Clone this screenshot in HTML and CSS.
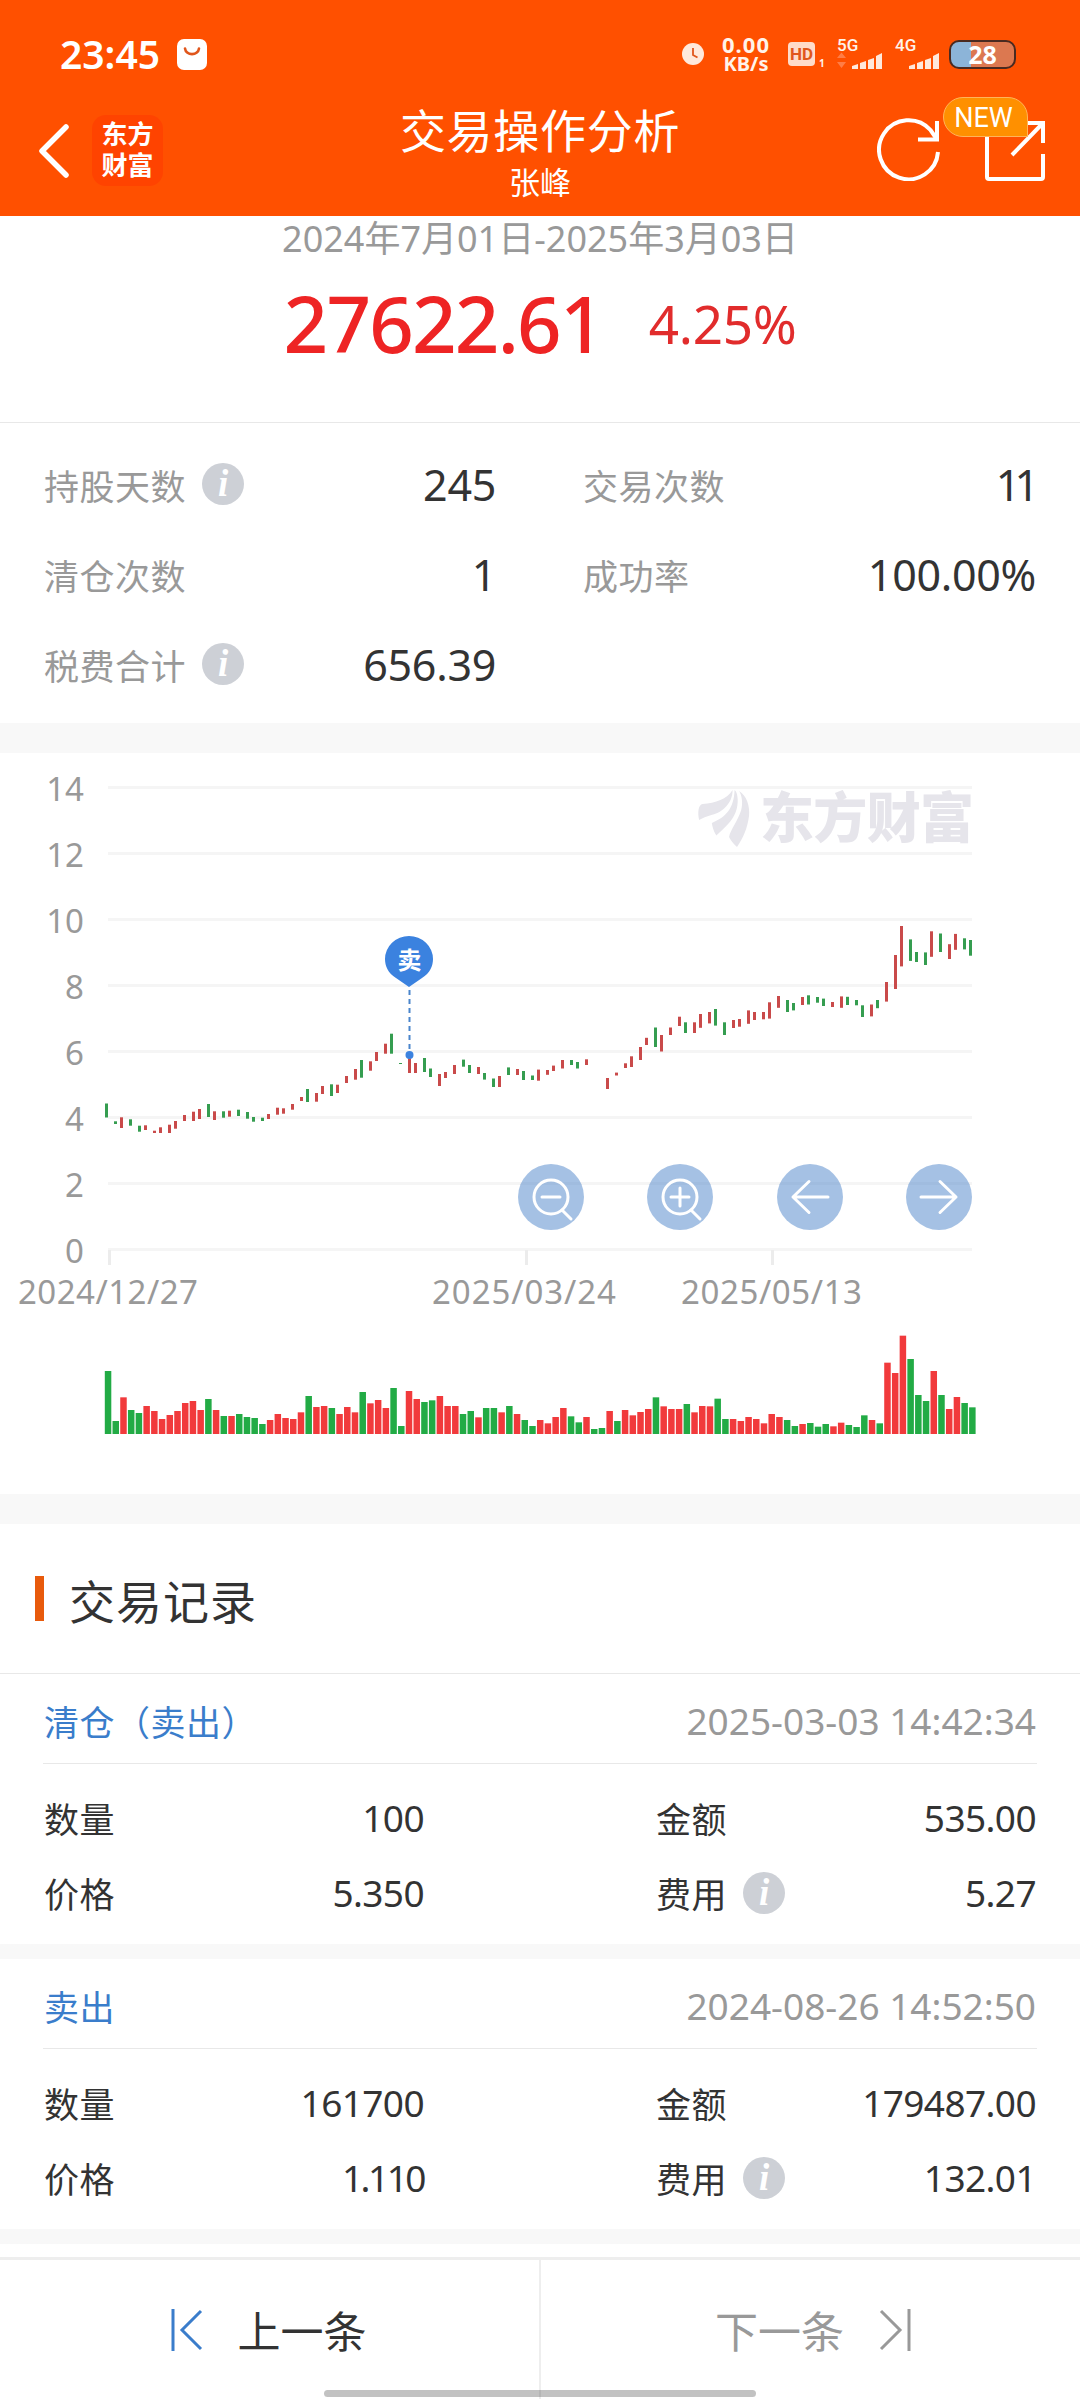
FILE: index.html
```html
<!DOCTYPE html>
<html lang="zh-CN">
<head>
<meta charset="UTF-8">
<meta name="viewport" content="width=device-width, initial-scale=1.0">
<title>交易操作分析</title>
<link rel="stylesheet" href="styles.css">
</head>
<body>

<header class="header">
    <div class="status-bar">
        <span class="clock">23:45</span>
        <svg class="icon-bag" width="30" height="31" viewBox="0 0 30 31">
            <rect width="30" height="31" rx="7" fill="#fff"/>
            <path d="M8 9.500c1 7.500 13 7.500 14 0" fill="none" stroke="#e0561c" stroke-width="2.600" stroke-linecap="round"/>
        </svg>
        <div class="status-right">
            <svg class="icon-alarm" width="22" height="22" viewBox="0 0 22 22">
                <circle cx="11" cy="11" r="11" fill="#ffe9dc"/>
                <path d="M11 5v7l4.500 2.500" fill="none" stroke="#e0561c" stroke-width="1.800"/>
            </svg>
            <div class="net-speed"><span>0.00</span><span>KB/s</span></div>
            <span class="hd">HD</span>
            <span class="sim-no">1</span>
            <div class="signal signal-5g">
                <span>5G</span>
                <svg width="46" height="18" viewBox="0 0 46 18">
                    <path d="M0 6l4.500-5.500L9 6zM0 10h9l-4.500 6z" fill="#ff7d46"/>
                    <path d="M15 17v-3l6-2v5zM23 17v-6l6-2v8zM31 17V8l6-2v11zM39 17V4l6-3v16z" fill="#ffe9dc"/>
                </svg>
            </div>
            <div class="signal signal-4g">
                <span>4G</span>
                <svg width="46" height="18" viewBox="0 0 46 18">
                    <path d="M14 17v-3l6-2v5zM22 17v-6l6-2v8zM30 17V8l6-2v11zM38 17V4l6-3v16z" fill="#ffe9dc"/>
                </svg>
            </div>
            <span class="battery">28</span>
        </div>
    </div>

    <nav class="nav-bar">
        <svg class="icon-back" width="32" height="56" viewBox="0 0 32 56">
            <path d="M28 4L4 28l24 24" fill="none" stroke="#fff" stroke-width="5.500" stroke-linecap="round" stroke-linejoin="round"/>
        </svg>
        <div class="app-logo">东方<br>财富</div>
        <div class="nav-title">
            <h1>交易操作分析</h1>
            <p>张峰</p>
        </div>
        <div class="nav-actions">
            <svg width="64" height="64" viewBox="0 0 64 64">
                <path d="M61 35A29.500 29.500 0 1 1 53.500 13L59 21" fill="none" stroke="#fff" stroke-width="4"/>
                <path d="M60 4v18.500H41" fill="none" stroke="#fff" stroke-width="4"/>
            </svg>
            <div class="share">
                <svg width="64" height="64" viewBox="0 0 64 64">
                    <path d="M25 6H5q-1 0-1 1v53q0 2 2 2h52q2 0 2-2V37M36 6h24v20M60 6L29 38" fill="none" stroke="#fff" stroke-width="4"/>
                </svg>
                <span class="badge">NEW</span>
            </div>
        </div>
    </nav>
</header>

<section class="summary">
    <p class="period">2024年7月01日-2025年3月03日</p>
    <div class="profit">
        <span class="profit-amount">27622.61</span>
        <span class="profit-rate">4.25%</span>
    </div>
</section>

<section class="stats">
    <div class="stat"><span>持股天数</span><i class="info">i</i><b>245</b></div>
    <div class="stat"><span>交易次数</span><b class="narrow">11</b></div>
    <div class="stat"><span>清仓次数</span><b>1</b></div>
    <div class="stat"><span>成功率</span><b>100.00%</b></div>
    <div class="stat"><span>税费合计</span><i class="info">i</i><b>656.39</b></div>
</section>

<section class="chart">
    <svg id="kline" width="1080" height="741" viewBox="0 753 1080 741">
        <g id="grid"></g>
        <g class="watermark">
            <g transform="translate(540 740) scale(.3444 .37)">
                <path d="M462 216C457 195 460 175 472 173C510 170 543 160 559 135C560 170 530 195 500 202C485 206 470 212 462 216Z"/>
                <path d="M512 258C503 245 500 232 499 224C540 208 563 185 565 135C575 142 578 172 568 195C558 220 535 238 512 258Z"/>
                <path d="M572 289C560 280 552 268 549 262C552 245 575 217 584 190C590 170 586 150 578 138C600 150 610 180 607 205C602 240 590 265 572 289Z"/>
            </g>
            <text x="760" y="838" textLength="214">东方财富</text>
        </g>
        <g id="candles"></g>
        <g id="volumes"></g>
        <g class="marker">
            <path d="M409.500 990v62" stroke-dasharray="5 4"/>
            <circle cx="409.500" cy="1055" r="4"/>
            <path d="M409 987l-13-9c-8-5-11-12-11-19a24 23 0 0 1 48 0c0 7-3 14-11 19z"/>
            <text x="409.500" y="969">卖</text>
        </g>
    </svg>
    <div class="chart-tools">
        <button class="tool"><svg viewBox="0 0 66 66"><circle cx="33" cy="33" r="17"/><path d="M24 33h18M44 46l9 9"/></svg></button>
        <button class="tool"><svg viewBox="0 0 66 66"><circle cx="33" cy="33" r="17"/><path d="M24 33h18M33 24v18M44 46l9 9"/></svg></button>
        <button class="tool"><svg viewBox="0 0 66 66"><path d="M51 33H16M32 17.500L16 33l16 15.500"/></svg></button>
        <button class="tool"><svg viewBox="0 0 66 66"><path d="M15 33h35M34 17.500L50 33 34 48.500"/></svg></button>
    </div>
</section>

<section class="records">
    <h2>交易记录</h2>

    <article class="record">
        <div class="record-head"><span>清仓（卖出）</span><time>2025-03-03 14:42:34</time></div>
        <dl class="record-body">
            <div><dt>数量</dt><dd>100</dd></div>
            <div><dt>金额</dt><dd>535.00</dd></div>
            <div><dt>价格</dt><dd>5.350</dd></div>
            <div><dt>费用</dt><i class="info">i</i><dd>5.27</dd></div>
        </dl>
    </article>

    <article class="record">
        <div class="record-head"><span>卖出</span><time>2024-08-26 14:52:50</time></div>
        <dl class="record-body">
            <div><dt>数量</dt><dd>161700</dd></div>
            <div><dt>金额</dt><dd>179487.00</dd></div>
            <div><dt>价格</dt><dd class="narrow">1.110</dd></div>
            <div><dt>费用</dt><i class="info">i</i><dd>132.01</dd></div>
        </dl>
    </article>
</section>

<footer class="pager">
    <a class="pager-prev">
        <svg width="32" height="44" viewBox="0 0 32 44"><path d="M2 1v42M30 3L11 22l19 19"/></svg>
        <span>上一条</span>
    </a>
    <a class="pager-next">
        <span>下一条</span>
        <svg width="32" height="44" viewBox="0 0 32 44"><path d="M30 1v42M2 3l19 19L2 41"/></svg>
    </a>
    <div class="home-indicator"></div>
</footer>

<script src="chart.js"></script>
</body>
</html>
```
FILE: chart.js
```js
// K线: 颜色 x 上沿 下沿
const candles = `
g 106.5 1103.5 1117.5|g 115.5 1121.3 1124|r 121.5 1117.3 1128|g 130.5 1119.3 1125.7|g 139.5 1125.7 1131.7|r 145.5 1125.3 1130
r 154.5 1130.7 1133|r 160.5 1127.3 1133|r 169.5 1124.7 1133|r 175.5 1121 1128.7|r 184.5 1115 1121|r 193.5 1111.7 1121
r 199.5 1109 1119|g 208.5 1104 1117|r 214.5 1111.3 1120|g 223.5 1111.3 1117.7|r 229.5 1110.7 1116.7|g 238.5 1109.7 1116
g 247.5 1112 1118.7|g 253.5 1117 1121.7|g 262.5 1117.7 1121|r 268.5 1114 1119|r 277.5 1107.7 1114.7|r 283.5 1108.3 1113.7
r 292.5 1104 1109.7|r 301.5 1097 1101|g 307.5 1089 1102|r 316.5 1093 1101.7|r 322.5 1086 1094|g 331.5 1084.3 1096
r 337.5 1084.7 1093|r 346.5 1076 1083|r 355.5 1069 1079.7|g 361.5 1060 1077.7|r 370.5 1061.3 1070.7|r 376.5 1052 1061
r 385.5 1043.7 1053.7|g 391.5 1033.7 1053.7|g 400.5 1063 1064|r 409.5 1058.3 1073|r 415.5 1063 1073|g 424.5 1058 1072
g 430.5 1068.5 1077|r 439.5 1074 1086|r 445.5 1072 1078|r 454.5 1065 1074|g 463.5 1059.6 1066.7|g 469.5 1065 1073
r 478.5 1067 1074|g 484.5 1073 1079.6|g 493.5 1078.5 1087|r 499.5 1076 1087|g 508.5 1067.4 1075|r 517.5 1069 1075
g 523.5 1071 1080|g 532.5 1075.5 1080|r 538.5 1069.6 1080.7|r 547.5 1070 1074.8|r 553.5 1065.6 1071|r 562.5 1060 1068.5
g 571.5 1060 1065|g 577.5 1062 1068.5|r 586.5 1059.3 1065|r 607.5 1078 1089|r 616.5 1072.6 1075.5|r 625.5 1063.3 1068
r 631.5 1056.3 1067|r 640.5 1047 1060|r 646.5 1037.8 1045|g 655.5 1027.5 1047|r 661.5 1035 1051.5|r 670.5 1027.5 1035
r 679.5 1016.7 1026|g 685.5 1022.3 1033|r 694.5 1022.3 1033|r 700.5 1014 1027.8|r 709.5 1012 1023.4|g 715.5 1009 1025.6
g 724.5 1022.3 1035|r 733.5 1020 1028|r 739.5 1019 1026.7|r 748.5 1010.4 1023.8|r 754.5 1012 1020|r 763.5 1012 1019.3
r 769.5 1002.3 1018.6|r 778.5 996 1007.8|g 787.5 1000 1012|g 793.5 1003 1010.4|r 802.5 997 1005|g 808.5 995.3 1004.5
g 817.5 997 1002.7|g 823.5 998.6 1006|r 832.5 1002 1007|r 841.5 996.4 1007.8|g 847.5 996.8 1005|g 856.5 1000 1005.3
g 862.5 1005.3 1017|r 871.5 1004.5 1016.4|g 877.5 1000 1008.2|r 886.5 982 1001.6|r 895.5 955 989|r 901.5 926 966.4
g 910.5 939.4 960.9|g 916.5 952 962|g 925.5 952.4 965|r 931.5 931.3 956.8|g 940.5 933.5 952|r 949.5 944.2 959
r 955.5 933.9 949.8|g 964.5 938.3 949.4|g 970.5 940 955.7`;

// 成交量: 颜色+柱高(1/3像素)
const volumes = `g189 g39 r110 g72 g63 r84 r69 r45 r57 r69 r93 r99 r72 g105 r72 g54 r54 g60 g51 g48 g30 r42 r60 r48 r45 r65
g114 r81 r84 g78 r60 r81 r65 g126 r92 r102 r78 g138 g24 r129 r105 g96 g101 r114 r84 r84 g60 g69 r50 g78 g78 r65 g84 r60
g42 g24 r42 r32 r51 r78 g53 g35 r51 g15 g18 r69 g39 r72 r56 r66 r75 g110 r83 r75 r75 g90 r65 r84 r83 g106 g45 r45 r39 r51
r45 r32 r60 r51 g42 g24 r30 g33 g22 g30 r23 r34 g27 g21 g56 r42 g32 r214 r183 r295 g225 g117 g99 r189 g117 r75 r111 g93 g80`;

const BASE_Y = 1434;

function svg(parent, tag, attrs, text) {
    const el = document.createElementNS('http://www.w3.org/2000/svg', tag);
    for (const key in attrs) el.setAttribute(key, attrs[key]);
    if (text) el.textContent = text;
    document.getElementById(parent).appendChild(el);
}

// 网格和Y轴
for (let i = 0; i <= 7; i++) {
    const y = Math.round(786 + i * 66);
    svg('grid', 'rect', { class: 'grid-line', x: 108, y: y, width: 864, height: 3 });
    svg('grid', 'text', { class: 'axis', x: 84, y: y + 14.5, 'text-anchor': 'end' }, String(14 - i * 2));
}

// X轴
[['2024/12/27', 109.5, 18, 180], ['2025/03/24', 526.5, 432, 184], ['2025/05/13', 772.5, 681, 181]].forEach(([date, tick, x, w]) => {
    svg('grid', 'rect', { class: 'tick', x: tick - 1.5, y: 1250, width: 3, height: 15 });
    svg('grid', 'text', { class: 'axis', x: x, y: 1304, textLength: w }, date);
});

candles.trim().split(/[|\n]/).forEach(item => {
    const [color, x, top, bottom] = item.split(' ');
    svg('candles', 'rect', { class: 'candle-' + color, x: x - 1.5, y: top, width: 3, height: bottom - top });
});

volumes.split(/\s+/).forEach((item, i) => {
    const h = parseInt(item.slice(1), 10) / 3;
    svg('volumes', 'rect', { class: 'volume-' + item[0], x: 104.8 + i * 7.717, y: BASE_Y - h, width: 6.5, height: h });
});
```
FILE: styles.css
```css
* {
    box-sizing: border-box;
}

body {
    margin: 0;
    width: 1080px;
    height: 2400px;
    overflow: hidden;
    background-color: #fff;
    color: #333;
    font-family: "Noto Sans", "Noto Sans CJK SC", sans-serif;
    font-size: 35px;
}

h1, h2, p, dl, dd {
    margin: 0;
    font-weight: normal;
}

svg {
    display: block;
    flex: none;
}

/* 顶部 */
.header {
    height: 216px;
    background-color: #ff5000;
    color: #fff;
}

/* 状态栏 */
.status-bar {
    display: flex;
    align-items: center;
    height: 108px;
    padding: 0 64px 0 60px;
}
.clock {
    width: 117px;
    font-size: 39px;
    font-weight: 600;
    line-height: 54px;
}
.status-right {
    display: flex;
    align-items: center;
    margin-left: auto;
    color: #fff3ea;
}
.net-speed {
    display: flex;
    flex-direction: column;
    align-items: center;
    width: 52px;
    margin: 0 16px 0 16px;
    font-size: 20px;
    font-weight: 700;
    line-height: 19px;
}
.net-speed span:first-child {
    font-size: 22px;
    letter-spacing: 1px;
}
.hd {
    width: 27px;
    height: 24px;
    border-radius: 4px;
    background-color: #ffdcca;
    color: #e0561c;
    font: 700 17px/24px "Roboto", sans-serif;
    text-align: center;
}
.sim-no {
    width: 22px;
    padding: 17px 0 0 4px;
    font-size: 10px;
    font-weight: 700;
    line-height: 14px;
}
.signal {
    width: 46px;
    height: 32px;
    font: 500 17px/14px "Roboto", sans-serif;
}
.signal span {
    display: block;
}
.signal-4g {
    margin: 0 8px 0 12px;
}
.battery {
    width: 67px;
    height: 29px;
    border: 2px solid #4a2a20;
    border-radius: 10px;
    background: linear-gradient(to right, #8cb4d8 20px, #dc7850 20px);
    color: #fff;
    font-size: 25px;
    font-weight: 700;
    line-height: 25px;
    text-align: center;
}

/* 导航栏 */
.nav-bar {
    display: flex;
    height: 108px;
    padding: 0 33px 0 38px;
}
.icon-back {
    margin-top: 15px;
}
.app-logo {
    width: 71px;
    height: 71px;
    margin: 7px 0 0 22px;
    padding-top: 4px;
    border-radius: 14px;
    background-color: #ff4300;
    font-size: 26px;
    font-weight: 700;
    line-height: 31px;
    text-align: center;
}
.nav-title {
    flex: 1;
    padding-left: 40px;
    text-align: center;
}
.nav-title h1 {
    font-size: 46px;
    line-height: 44px;
    letter-spacing: 0.7px;
}
.nav-title p {
    padding-top: 8px;
    font-size: 31px;
    line-height: 44px;
}
.nav-actions {
    display: flex;
    gap: 42px;
    padding-top: 9px;
}
.share {
    position: relative;
}
.badge {
    position: absolute;
    left: -40px;
    top: -20px;
    width: 85px;
    height: 40px;
    border: 1px solid #ffb45a;
    border-radius: 20px 20px 0 20px;
    background-color: #ff9000;
    font: 27px/40px "Roboto", sans-serif;
    text-align: center;
    padding-right: 4px;
}

/* 收益 */
.summary {
    height: 207px;
    border-bottom: 1px solid #e8e8e8;
    text-align: center;
}
.period {
    padding-top: 1px;
    color: #999;
    font-size: 36px;
    line-height: 44px;
}
.profit {
    display: flex;
    align-items: center;
    justify-content: center;
    gap: 46px;
    height: 124px;
    color: #ee2424;
}
.profit-amount {
    font-size: 78px;
    font-weight: 500;
    letter-spacing: -1.8px;
}
.profit-rate {
    color: #e12c2c;
    font-size: 53px;
    letter-spacing: -0.3px;
}

/* 统计 */
.stats {
    display: grid;
    grid-template-columns: 452px 453px;
    column-gap: 87px;
    grid-auto-rows: 90px;
    height: 300px;
    padding: 16px 44px 0;
    color: #999;
}
.stat {
    display: flex;
    align-items: center;
}
.stat span,
.record-head span,
.record-body dt {
    letter-spacing: 0.5px;
}
.stat b {
    margin-left: auto;
    color: #333;
    font-size: 43px;
    font-weight: normal;
    letter-spacing: -0.3px;
}
.stat .narrow {
    margin-right: 3px;
    letter-spacing: -6px;
}
.info {
    width: 42px;
    height: 42px;
    margin-left: 16px;
    border-radius: 50%;
    background-color: #cdd0d6;
    color: #fff;
    font: italic 700 37px/41px "Liberation Serif", serif;
    text-align: center;
}

/* 图表 */
.chart {
    position: relative;
    height: 801px;
    border-top: 30px solid #f8f8f8;
    border-bottom: 30px solid #f8f8f8;
}
.grid-line {
    fill: #f5f5f5;
}
.tick {
    fill: #ececec;
}
.axis {
    fill: #999;
    font-size: 33px;
}
.candle-r {
    fill: #c94a4a;
}
.candle-g {
    fill: #359d50;
}
.volume-r {
    fill: #f13a3c;
}
.volume-g {
    fill: #22ab45;
}
.watermark {
    fill: #e6e5eb;
    font-family: "Noto Sans CJK SC", sans-serif;
    font-size: 54px;
    font-weight: 900;
}
.marker {
    fill: #3b82df;
}
.marker path:first-child {
    stroke: #4a85cc;
    stroke-width: 2;
}
.marker text {
    fill: #fff;
    font-size: 24px;
    font-weight: 700;
    text-anchor: middle;
}
.chart-tools {
    position: absolute;
    left: 518px;
    top: 411px;
    display: flex;
    justify-content: space-between;
    width: 454px;
}
.tool {
    width: 66px;
    height: 66px;
    padding: 0;
    border: none;
    border-radius: 50%;
    background-color: rgba(75, 132, 201, 0.5);
}
.tool svg {
    fill: none;
    stroke: #fff;
    stroke-width: 3;
    stroke-linecap: round;
    stroke-linejoin: round;
}

/* 交易记录 */
.records h2 {
    display: flex;
    align-items: center;
    height: 150px;
    padding: 0 0 0 35px;
    border-bottom: 1px solid #e8e8e8;
    font-size: 46px;
    letter-spacing: 1px;
}
.records h2::before {
    content: "";
    width: 9px;
    height: 45px;
    margin-right: 25px;
    background-color: #e85a0c;
}
.record {
    height: 285px;
    padding: 0 43px;
    border-bottom: 15px solid #f8f8f8;
}
.record-head {
    display: flex;
    align-items: center;
    justify-content: space-between;
    height: 90px;
    padding: 3px 1px 0;
    border-bottom: 1px solid #e8e8e8;
    color: #3a7dcb;
}
.record-head time {
    color: #999;
    font-size: 37px;
}
.record-body {
    display: grid;
    grid-template-columns: 380px 380px;
    justify-content: space-between;
    grid-auto-rows: 75px;
    padding: 16px 1px 0;
}
.record-body div {
    display: flex;
    align-items: center;
}
.record-body dd {
    margin-left: auto;
    font-size: 37px;
    letter-spacing: -0.6px;
}
.record-body .narrow {
    letter-spacing: -2.5px;
}

/* 底部翻页 */
.pager {
    position: relative;
    display: flex;
    height: 143px;
    margin-top: 13px;
    border-top: 3px solid #eee;
    font-size: 43px;
}
.pager a {
    display: flex;
    align-items: center;
    justify-content: center;
    gap: 35px;
    width: 540px;
    height: 139px;
}
.pager svg {
    fill: none;
    stroke: #3a7dcb;
    stroke-width: 3;
}
.pager .pager-prev {
    width: 541px;
    padding-right: 2px;
    border-right: 2px solid #eee;
}
.pager .pager-next {
    width: 539px;
    padding-left: 5px;
    color: #999;
}
.pager .pager-next svg {
    stroke: #999;
}
.home-indicator {
    position: absolute;
    left: 324px;
    bottom: 3px;
    width: 432px;
    height: 7px;
    border-radius: 4px;
    background-color: rgba(0, 0, 0, 0.24);
}
```
